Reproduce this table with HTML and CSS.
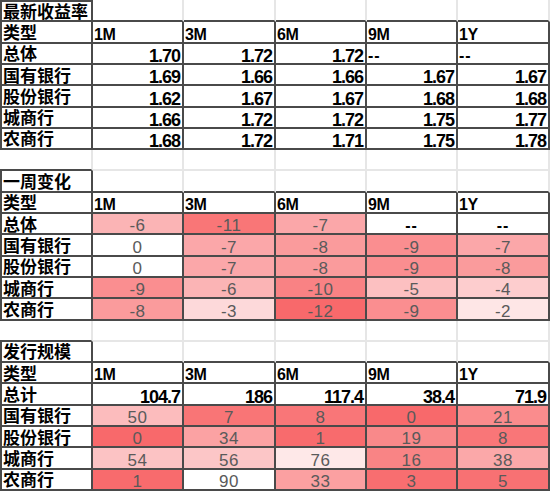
FILE: index.html
```html
<!DOCTYPE html>
<html lang="zh-CN">
<head>
<meta charset="utf-8">
<title>收益率</title>
<link rel="stylesheet" href="styles.css">
</head>
<body>
<table class="sheet">
<colgroup>
<col class="c0"><col class="c1"><col class="c2"><col class="c3"><col class="c4"><col class="c5">
</colgroup>
<tbody>
<tr class="row first"><td class="title lab">最新收益率</td><td class="tb"></td><td class="tb"></td><td class="tb"></td><td class="tb"></td><td class="tb"></td></tr>
<tr class="row"><td class="d lab">类型</td><td class="d h">1M</td><td class="d h">3M</td><td class="d h">6M</td><td class="d h">9M</td><td class="d h">1Y</td></tr>
<tr class="row"><td class="d lab">总体</td><td class="d n">1.70</td><td class="d n">1.72</td><td class="d n">1.72</td><td class="d dl">--</td><td class="d dl">--</td></tr>
<tr class="row"><td class="d lab">国有银行</td><td class="d n">1.69</td><td class="d n">1.66</td><td class="d n">1.66</td><td class="d n">1.67</td><td class="d n">1.67</td></tr>
<tr class="row"><td class="d lab">股份银行</td><td class="d n">1.62</td><td class="d n">1.67</td><td class="d n">1.67</td><td class="d n">1.68</td><td class="d n">1.68</td></tr>
<tr class="row"><td class="d lab">城商行</td><td class="d n">1.66</td><td class="d n">1.72</td><td class="d n">1.72</td><td class="d n">1.75</td><td class="d n">1.77</td></tr>
<tr class="row"><td class="d lab">农商行</td><td class="d n">1.68</td><td class="d n">1.72</td><td class="d n">1.71</td><td class="d n">1.75</td><td class="d n">1.78</td></tr>

<tr class="row"><td class="pre"></td><td></td><td></td><td></td><td></td><td></td></tr>

<tr class="row"><td class="title lab">一周变化</td><td class="tb"></td><td class="tb"></td><td class="tb"></td><td class="tb"></td><td class="tb"></td></tr>
<tr class="row"><td class="d lab">类型</td><td class="d h">1M</td><td class="d h">3M</td><td class="d h">6M</td><td class="d h">9M</td><td class="d h">1Y</td></tr>
<tr class="row"><td class="d lab">总体</td><td class="d c" style="background:#fbb4b5">-6</td><td class="d c" style="background:#f97677">-11</td><td class="d c" style="background:#fba7a9">-7</td><td class="d dc">--</td><td class="d dc">--</td></tr>
<tr class="row"><td class="d lab">国有银行</td><td class="d c">0</td><td class="d c" style="background:#fba7a9">-7</td><td class="d c" style="background:#fa9b9c">-8</td><td class="d c" style="background:#fa8e90">-9</td><td class="d c" style="background:#fba7a9">-7</td></tr>
<tr class="row"><td class="d lab">股份银行</td><td class="d c">0</td><td class="d c" style="background:#fba7a9">-7</td><td class="d c" style="background:#fa9b9c">-8</td><td class="d c" style="background:#fa8e90">-9</td><td class="d c" style="background:#fa9b9c">-8</td></tr>
<tr class="row"><td class="d lab">城商行</td><td class="d c" style="background:#fa8e90">-9</td><td class="d c" style="background:#fbb4b5">-6</td><td class="d c" style="background:#f98284">-10</td><td class="d c" style="background:#fcc0c1">-5</td><td class="d c" style="background:#fdcdce">-4</td></tr>
<tr class="row"><td class="d lab">农商行</td><td class="d c" style="background:#fa9b9c">-8</td><td class="d c" style="background:#fdd9da">-3</td><td class="d c" style="background:#f8696b">-12</td><td class="d c" style="background:#fa8e90">-9</td><td class="d c" style="background:#fee6e6">-2</td></tr>

<tr class="row"><td class="pre"></td><td></td><td></td><td></td><td></td><td></td></tr>

<tr class="row"><td class="title lab">发行规模</td><td class="tb"></td><td class="tb"></td><td class="tb"></td><td class="tb"></td><td class="tb"></td></tr>
<tr class="row"><td class="d lab">类型</td><td class="d h">1M</td><td class="d h">3M</td><td class="d h">6M</td><td class="d h">9M</td><td class="d h">1Y</td></tr>
<tr class="row"><td class="d lab">总计</td><td class="d n">104.7</td><td class="d n">186</td><td class="d n">117.4</td><td class="d n">38.4</td><td class="d n">71.9</td></tr>
<tr class="row"><td class="d lab">国有银行</td><td class="d c" style="background:#fcbcbd">50</td><td class="d c" style="background:#f97576">7</td><td class="d c" style="background:#f97678">8</td><td class="d c" style="background:#f8696b">0</td><td class="d c" style="background:#fa8c8d">21</td></tr>
<tr class="row"><td class="d lab">股份银行</td><td class="d c" style="background:#f8696b">0</td><td class="d c" style="background:#fba2a3">34</td><td class="d c" style="background:#f86b6d">1</td><td class="d c" style="background:#f9898a">19</td><td class="d c" style="background:#f97678">8</td></tr>
<tr class="row"><td class="d lab">城商行</td><td class="d c" style="background:#fcc3c4">54</td><td class="d c" style="background:#fcc6c7">56</td><td class="d c" style="background:#fee8e8">76</td><td class="d c" style="background:#f98485">16</td><td class="d c" style="background:#fba8a9">38</td></tr>
<tr class="row"><td class="d lab">农商行</td><td class="d c" style="background:#f86b6d">1</td><td class="d c">90</td><td class="d c" style="background:#fba0a1">33</td><td class="d c" style="background:#f86e70">3</td><td class="d c" style="background:#f87173">5</td></tr>
</tbody>
</table>
</body>
</html>
```

FILE: styles.css
```css
html, body {
  margin: 0;
  padding: 0;
  background: #ffffff;
}

.sheet {
  border-collapse: separate;
  border-spacing: 0;
  table-layout: fixed;
  width: 550px;
  font-family: "Liberation Sans", Arial, sans-serif;
  color: #000;
}

.c0 { width: 93px; }
.c1 { width: 91px; }
.c2 { width: 92px; }
.c3 { width: 91px; }
.c4 { width: 91px; }
.c5 { width: 92px; }

.row { height: 21.3px; }
.row.first { height: 22.35px; }

.sheet td {
  border: 0;
  border-right: 2px solid #e6e6e6;
  border-bottom: 2px solid #e6e6e6;
  padding: 0 2px;
  white-space: nowrap;
  vertical-align: bottom;
  overflow: visible;
  line-height: 14px;
  font-size: 16px;
  box-sizing: border-box;
}

.sheet td.d,
.sheet td.title {
  border-right-color: #4a4a4a;
  border-bottom-color: #4a4a4a;
  background: #ffffff;
}

.sheet td.lab {
  border-left: 2px solid #4a4a4a;
}

.first .title { border-top: 2px solid #4a4a4a; }

.sheet td.tb,
.sheet td.pre { border-bottom-color: #4a4a4a; }

.sheet td.lab {
  font-family: "Noto Sans CJK SC", "Liberation Sans", sans-serif;
  font-weight: 700;
  font-size: 17px;
  line-height: 18px;
  vertical-align: middle;
  padding-left: 1px;
}

.sheet td.h {
  font-weight: 700;
  font-size: 16px;
  letter-spacing: -0.5px;
  padding-left: 1px;
}

.sheet td.n {
  text-align: right;
  font-weight: 700;
  font-size: 18px;
  letter-spacing: -1px;
  padding-right: 2px;
}

.sheet td.dl {
  font-weight: 700;
  font-size: 16px;
  letter-spacing: 1px;
  padding-left: 1px;
}

.sheet td.dc {
  text-align: center;
  font-weight: 700;
  font-size: 16px;
  letter-spacing: 1px;
}

.sheet td.c {
  text-align: center;
  color: #5a5a5a;
  font-size: 17px;
  letter-spacing: 0.5px;
}
```
